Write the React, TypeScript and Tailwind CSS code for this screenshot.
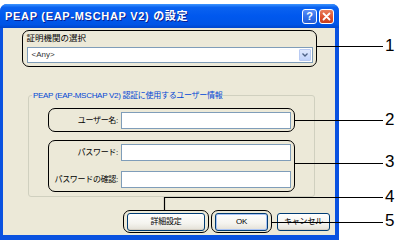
import type { ReactNode } from 'react'

const FONT = "font-['Liberation_Sans','Noto_Sans_CJK_JP',sans-serif]"

function Callout({ className, children }: { className: string; children: ReactNode }) {
  return (
    <div className={`rounded-[7px] border-[1.5px] border-black ${className}`}>
      {children}
    </div>
  )
}

function TextBox({ className }: { className: string }) {
  return <div className={`h-[17px] border border-[#7f9db9] bg-white ${className}`} />
}

function XpButton({ label, isDefault, className }: { label: string; isDefault?: boolean; className: string }) {
  return (
    <div
      className={`flex h-[18px] items-center justify-center rounded-[3px] border border-[#003c74] bg-[linear-gradient(180deg,#ffffff_0%,#f4f3ee_60%,#e3e0d6_100%)] text-[8px] tracking-[-0.2px] text-black ${
        isDefault ? 'shadow-[inset_0_0_0_1px_#a9c3f5]' : 'shadow-[inset_0_-1px_0_#d6d0c5]'
      } ${className}`}
    >
      {label}
    </div>
  )
}

function Field({ label }: { label: string }) {
  return (
    <div className="flex items-center">
      <div className="flex w-[69px] justify-end">
        <span className="whitespace-nowrap text-[8px] leading-[11px] tracking-[-0.3px] text-black">{label}</span>
      </div>
      <TextBox className="ml-[3px] w-[170px]" />
    </div>
  )
}

function TitleBar() {
  return (
    <div className="flex h-[24px] items-center justify-between bg-[linear-gradient(180deg,#3d95ff_0%,#0a62f0_14%,#0058ee_50%,#0055e6_85%,#0046cc_100%)] pl-[5px] pr-[5px]">
      <span className="whitespace-nowrap text-[11px] font-bold tracking-[0.7px] text-white [text-shadow:1px_1px_0_#0a1f8f]">
        PEAP (EAP-MSCHAP V2) の設定
      </span>
      <div className="flex items-center gap-[2px]">
        <div className="flex h-[15px] w-[15px] items-center justify-center rounded-[3px] border border-white bg-[linear-gradient(180deg,#5b8ff7_0%,#2e6de8_60%,#2a5fd3_100%)] text-[11px] font-bold leading-none text-white">
          ?
        </div>
        <div className="flex h-[15px] w-[15px] items-center justify-center rounded-[3px] border border-white bg-[linear-gradient(180deg,#e9805f_0%,#dc4f2c_60%,#c8401f_100%)]">
          <svg width="9" height="9" viewBox="0 0 9 9">
            <path d="M1.5 1.5 L7.5 7.5 M7.5 1.5 L1.5 7.5" stroke="#fff" strokeWidth="1.8" strokeLinecap="round" />
          </svg>
        </div>
      </div>
    </div>
  )
}

function Dialog() {
  return (
    <div className="flex h-[236px] w-[339px] flex-col overflow-hidden rounded-t-[7px] bg-[#0a52e0]">
      <TitleBar />
      <div className="mb-[5px] ml-[3px] mr-[4px] flex-1 bg-[#ece9d8]">
        {/* 1: certificate authority */}
        <Callout className="ml-[19px] mt-[2px] h-[37px] w-[295px] pl-[3.5px] pt-[1px]">
          <div className="h-[12px] text-[8.5px] leading-[12px] text-black">証明機関の選択</div>
          <div className="mt-[2.5px] flex h-[16px] w-[286px] items-center justify-between border border-[#7f9db9] bg-white pl-[4px] pr-[1px]">
            <span className="text-[8px] text-[#333]">&lt;Any&gt;</span>
            <div className="flex h-[12px] w-[12px] items-center justify-center rounded-[1px] border border-[#b9cbf3] bg-[linear-gradient(180deg,#dfe8fd_0%,#c1d3fb_100%)]">
              <svg width="6" height="4" viewBox="0 0 6 4">
                <path d="M0.5 0.5 L3 3 L5.5 0.5" fill="none" stroke="#4d6185" strokeWidth="1.3" />
              </svg>
            </div>
          </div>
        </Callout>

        {/* user information group */}
        <fieldset className="ml-[25px] mt-[23px] h-[107px] w-[287px] rounded-[3px] border border-[#d0d0bf]">
          <legend className="ml-[3px] px-[1px] whitespace-nowrap text-[8px] leading-[11px] tracking-[-0.3px] text-[#0046d5]">
            PEAP (EAP-MSCHAP V2) 認証に使用するユーザー情報
          </legend>
          <Callout className="ml-[19px] mt-[7px] flex h-[24px] w-[247px] items-center">
            <Field label="ユーザー名:" />
          </Callout>
          <Callout className="ml-[19px] mt-[8px] flex h-[52px] w-[247px] flex-col justify-center gap-[10px]">
            <Field label="パスワード:" />
            <Field label="パスワードの確認:" />
          </Callout>
        </fieldset>

        {/* buttons */}
        <div className="mt-[13px] flex items-center">
          <Callout className="ml-[120px] flex h-[23px] w-[86px] items-center justify-center">
            <XpButton label="詳細設定" className="w-[78px]" />
          </Callout>
          <Callout className="ml-[2px] flex h-[23px] w-[61px] items-center justify-center">
            <XpButton label="OK" isDefault className="w-[53px]" />
          </Callout>
          <XpButton label="キャンセル" className="ml-[5px] w-[53px]" />
        </div>
      </div>
    </div>
  )
}

const MARKERS = [
  { n: '1', top: 'top-[36px]' },
  { n: '2', top: 'top-[110px]' },
  { n: '3', top: 'top-[152px]' },
  { n: '4', top: 'top-[187px]' },
  { n: '5', top: 'top-[211px]' },
]

export default function App() {
  return (
    <div className={`relative h-[244px] w-[398px] overflow-hidden bg-white ${FONT}`}>
      <div className="pt-[4px]">
        <Dialog />
      </div>

      {/* leader lines */}
      <svg className="pointer-events-none absolute left-0 top-0" width="398" height="244">
        <g stroke="#000" strokeWidth="1.2" fill="none">
          <path d="M317 46.5 H383" />
          <path d="M295 120.5 H383" />
          <path d="M295 163.5 H383" />
          <path d="M164.5 210 V197.5 H383" />
          <path d="M271 222.5 H383" />
        </g>
      </svg>

      {MARKERS.map((m) => (
        <span key={m.n} className={`absolute left-[385px] text-[17px] leading-[20px] text-black ${m.top}`}>
          {m.n}
        </span>
      ))}
    </div>
  )
}
